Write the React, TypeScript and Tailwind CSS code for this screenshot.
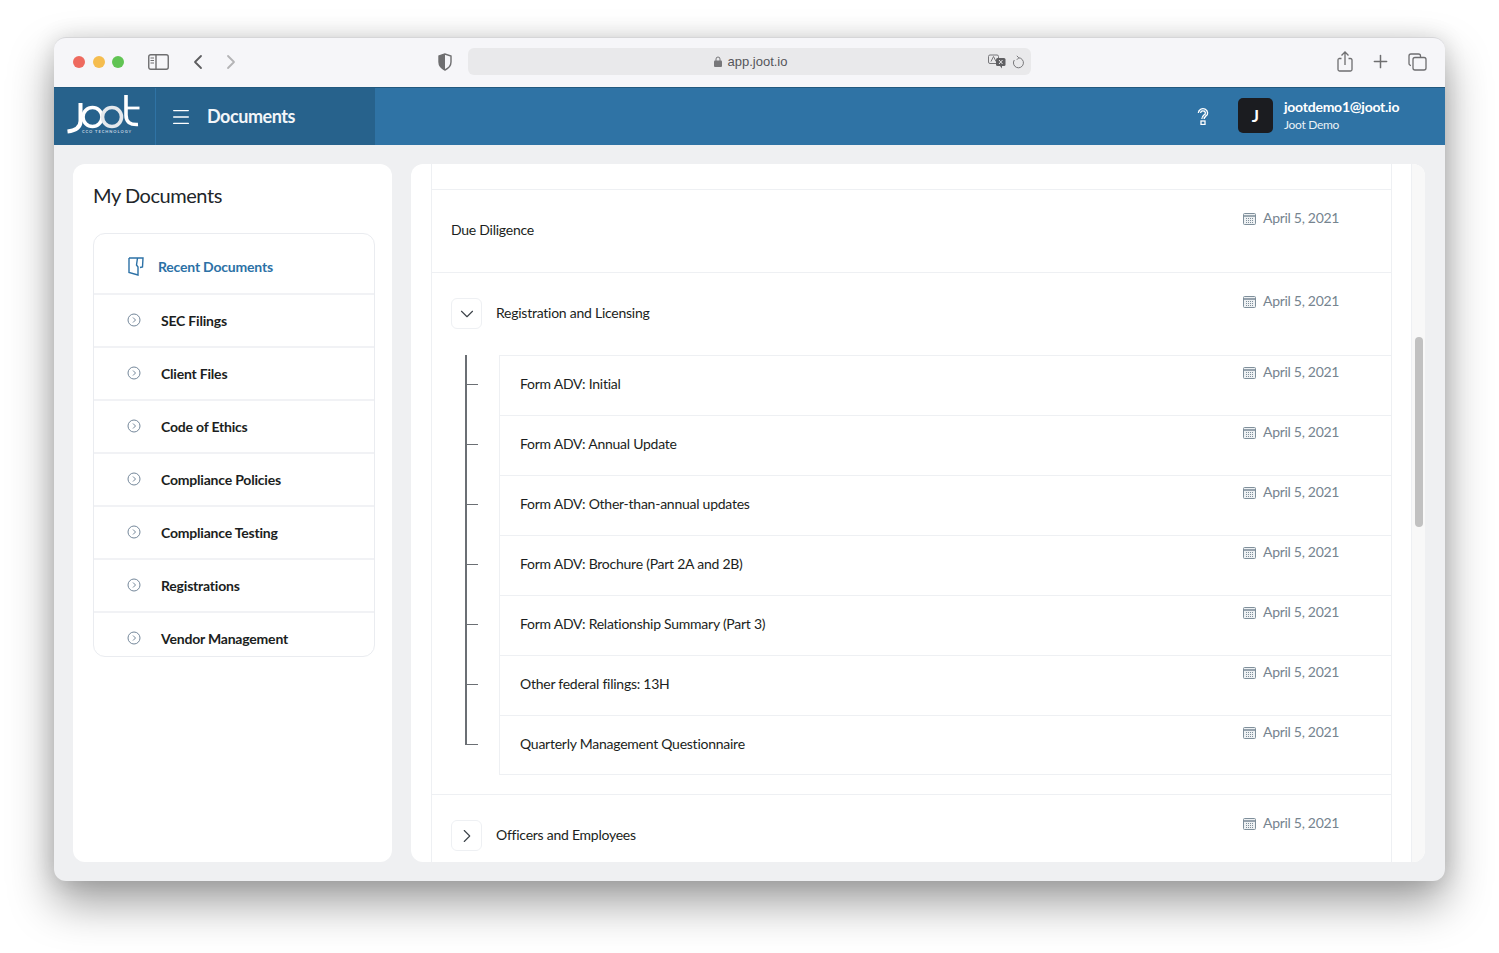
import { ChevronDown, ChevronLeft, ChevronRight, Menu, Plus } from "lucide-react";

const sideItems = [
  "SEC Filings",
  "Client Files",
  "Code of Ethics",
  "Compliance Policies",
  "Compliance Testing",
  "Registrations",
  "Vendor Management",
];

const formRows = [
  "Form ADV: Initial",
  "Form ADV: Annual Update",
  "Form ADV: Other-than-annual updates",
  "Form ADV: Brochure (Part 2A and 2B)",
  "Form ADV: Relationship Summary (Part 3)",
  "Other federal filings: 13H",
  "Quarterly Management Questionnaire",
];

function JootLogo() {
  return (
    <svg width="76" height="40" viewBox="0 0 76 40" fill="none" stroke="white" strokeWidth="3.600">
      <path d="M14.500 9v18c0 6-4 9.500-13 10.500" strokeWidth="4" />
      <circle cx="26.500" cy="23" r="9.500" />
      <circle cx="46" cy="23" r="9.500" stroke="#e4e8ec" />
      <path d="M60 1v20c0 7 4 10 12 9.500" />
      <path d="M60 14h13.500" strokeWidth="2.800" />
    </svg>
  );
}

function HelpIcon() {
  const curve = "M2.500 6a3.500 3.200 0 1 1 5.500 2.600C6.800 9.500 6 10 6 12";
  return (
    <svg width="12" height="18" viewBox="0 0 12 18" fill="none" className="ml-[822px]">
      <path d={curve} stroke="white" strokeWidth="3.600" />
      <path d={curve} stroke="#2f73a5" strokeWidth="1" />
      <rect x="4" y="14" width="4" height="3.500" fill="#2f73a5" stroke="white" strokeWidth="1.300" />
    </svg>
  );
}

function CalendarIcon() {
  return (
    <svg width="13" height="13" viewBox="0 0 13 13" fill="none" className="shrink-0">
      <rect x="0.5" y="1.500" width="12" height="11" rx="1" fill="#eef1f3" stroke="#7f8f9b" />
      <path d="M0.500 4h12" stroke="#7f8f9b" strokeWidth="1.600" />
      <path d="M3 6.500h7M3 8.500h7M3 10.500h7" stroke="#7f8f9b" strokeDasharray="1 1" />
    </svg>
  );
}

function DateLabel() {
  return (
    <div className="flex w-[96px] items-center gap-[7px] text-[14px] leading-[20px] tracking-[-0.3px] text-[#76848f]">
      <CalendarIcon />
      <span className="whitespace-nowrap">April 5, 2021</span>
    </div>
  );
}

function CircleArrow() {
  return (
    <svg width="14" height="14" viewBox="0 0 14 14" fill="none" className="mt-[1px] shrink-0">
      <circle cx="7" cy="7" r="6" stroke="#74879a" />
      <path d="M6 4.500 8.500 7 6 9.500" stroke="#74879a" />
    </svg>
  );
}

function BrowserBar() {
  return (
    <div className="flex h-[50px] items-center rounded-t-[12px] border-t border-[#d6d6d8] bg-[#f6f6f9] pb-[2px] pl-[19px]">
      <div className="flex gap-[7.5px]">
        <span className="size-[12px] rounded-full bg-[#ee6a5f]" />
        <span className="size-[12px] rounded-full bg-[#f5bd4f]" />
        <span className="size-[12px] rounded-full bg-[#61c454]" />
      </div>
      <svg width="21" height="16" viewBox="0 0 21 16" fill="none" className="ml-[24px]">
        <rect x="0.750" y="0.750" width="19.500" height="14.500" rx="2" stroke="#6e6e70" strokeWidth="1.400" />
        <path d="M8 1v14" stroke="#6e6e70" strokeWidth="1.400" />
        <path d="M2.500 4h3.500M2.500 6.500h3.500M2.500 9h3.500" stroke="#6e6e70" />
      </svg>
      <ChevronLeft size={24} strokeWidth={1.8} className="ml-[17px] text-[#5d5d60]" />
      <ChevronRight size={24} strokeWidth={1.8} className="ml-[9px] text-[#b4b4b6]" />
      <svg width="16" height="18" viewBox="0 0 16 18" fill="none" className="ml-[194px]">
        <path d="M8 1 2 3v6c0 4 3 6.500 6 8 3-1.500 6-4 6-8V3L8 1Z" stroke="#6e6e70" strokeWidth="1.400" />
        <path d="M8 1 2 3v6c0 4 3 6.500 6 8V1Z" fill="#6e6e70" />
      </svg>
      <div className="ml-[15px] flex h-[27px] w-[563px] items-center rounded-[6px] bg-[#e9e9eb] pr-[6px]">
        <div className="flex flex-1 items-center justify-center gap-[6px] pl-[45px] font-['Liberation_Sans',sans-serif] text-[13px] text-[#55555a]">
          <svg width="8" height="11" viewBox="0 0 8 11" fill="none">
            <path d="M2 5V3a2 2 0 0 1 4 0v2" stroke="#77777a" />
            <rect y="4.500" width="8" height="6.500" rx="1" fill="#77777a" />
          </svg>
          <span>app.joot.io</span>
        </div>
        <svg width="18" height="15" viewBox="0 0 18 15" fill="none">
          <rect x="0.500" y="1" width="10" height="8.500" rx="1.500" stroke="#77777a" />
          <path d="m3 7.500 2.500-5 2.500 5" stroke="#77777a" />
          <rect x="8" y="4" width="9.500" height="8" rx="1.500" fill="#5f5f62" />
          <path d="m11 6 3.500 4M14.500 6 11 10" stroke="#e9e9eb" />
          <path d="m12 12 2 2.500V12" fill="#5f5f62" />
        </svg>
        <svg width="13" height="14" viewBox="0 0 13 14" fill="none" stroke="#77777a" className="ml-[6px]">
          <path d="M6.500 2.800A5 5 0 1 1 2.300 5" />
          <path d="M4.800 0.800 6.800 2.800 4.800 4.800" />
        </svg>
      </div>
      <div className="ml-[306px] flex items-center">
        <svg width="16" height="21" viewBox="0 0 16 21" fill="none" stroke="#6e6e70" strokeWidth="1.300">
          <path d="M4.500 7.500H2a1.500 1.500 0 0 0-1 1.500v9.500A1.500 1.500 0 0 0 2.500 20h11a1.500 1.500 0 0 0 1.500-1.500V9a1.500 1.500 0 0 0-1.500-1.500H11.500" />
          <path d="M8 14V1M4.500 4.500 8 1l3.500 3.500" />
        </svg>
        <Plus size={21} strokeWidth={1.7} className="ml-[17px] text-[#6e6e70]" />
        <svg width="19" height="18" viewBox="0 0 19 18" fill="none" stroke="#6e6e70" strokeWidth="1.300" className="ml-[17px]">
          <path d="M3 12.500A2 2 0 0 1 1 10.500V3a2 2 0 0 1 2-2h7.500a2 2 0 0 1 2 2v1" />
          <rect x="5" y="4.500" width="13" height="12.500" rx="2" />
        </svg>
      </div>
    </div>
  );
}

function AppHeader() {
  return (
    <div className="flex h-[58px] items-stretch border-t border-[#22597f] bg-[#2f73a5] text-white">
      <div className="flex w-[321px] items-stretch bg-[#27628c]">
        <div className="flex w-[102px] flex-col items-start border-r border-[#2f73a5] pl-[12px] pt-[6px]">
          <JootLogo />
          <span className="-mt-[4px] ml-[16px] whitespace-nowrap text-[4px] leading-[4px] font-bold tracking-[0.24em] text-[#c6d6e2]">
            CCO TECHNOLOGY
          </span>
        </div>
        <div className="flex items-center">
          <Menu size={22} strokeWidth={1.4} className="ml-[14px]" />
          <span className="ml-[15px] text-[18px] font-bold tracking-[-0.45px] text-[#f2f6f9]">Documents</span>
        </div>
      </div>
      <div className="flex flex-1 items-center pb-[2px]">
        <HelpIcon />
        <div className="ml-[29px] flex size-[35px] items-center justify-center rounded-[5px] bg-[#1b1c20] text-[17px] font-bold">J</div>
        <div className="ml-[11px]">
          <p className="text-[14px] leading-[18px] font-bold tracking-[-0.25px]">jootdemo1@joot.io</p>
          <p className="text-[12px] leading-[18px] tracking-[-0.3px] text-[#eaf1f6]">Joot Demo</p>
        </div>
      </div>
    </div>
  );
}

function Sidebar() {
  return (
    <aside className="w-[319px] rounded-[12px] bg-white pl-[20px]">
      <h2 className="pt-[17px] text-[20px] leading-[28px] tracking-[-0.45px] text-[#212529]">My Documents</h2>
      <div className="mt-[24px] w-[282px] rounded-[12px] border border-[#eaecf0] text-[14px] font-bold tracking-[-0.2px]">
        <div className="flex h-[61px] items-center border-b-2 border-[#f1f2f5] pl-[34px] pt-[5px]">
          <svg width="16" height="19" viewBox="0 0 16 19" fill="none" stroke="#2c71a6" strokeWidth="1.400">
            <path d="M1 1h14l-.5 9-2.500.5" />
            <path d="M1 1v14.500l9 2.500v-8L8.500 8l1-7" />
          </svg>
          <span className="ml-[14px] text-[#2c71a6]">Recent Documents</span>
        </div>
        {sideItems.map((item, i) => (
          <div
            key={item}
            className={
              i === sideItems.length - 1
                ? "flex h-[43px] items-start pl-[33px] pt-[17px]"
                : "flex h-[53px] items-start border-b-2 border-[#f1f2f5] pl-[33px] pt-[17px]"
            }
          >
            <CircleArrow />
            <span className="ml-[20px] leading-[18px] text-[#1b1e21]">{item}</span>
          </div>
        ))}
      </div>
    </aside>
  );
}

function ExpandButton({ open }: { open: boolean }) {
  return (
    <div className="flex size-[31px] shrink-0 items-center justify-center rounded-[6px] border border-[#eef0f3] text-[#3c4248]">
      {open ? <ChevronDown size={22} strokeWidth={1.2} /> : <ChevronRight size={22} strokeWidth={1.2} />}
    </div>
  );
}

function DocumentsPanel() {
  return (
    <section className="flex h-[698px] w-[1014px] overflow-hidden rounded-[12px] bg-white pl-[20px]">
      <div className="w-[961px] border-x border-[#eef0f3] text-[14px] leading-[20px] tracking-[-0.25px] text-[#1b1e21]">
        <div className="h-[26px] border-b border-[#eef0f3]" />

        <div className="flex h-[83px] justify-between border-b border-[#eef0f3] pl-[19px] pr-[52px]">
          <span className="pt-[30px]">Due Diligence</span>
          <div className="pt-[18px]">
            <DateLabel />
          </div>
        </div>

        <div className="flex h-[82px] justify-between pl-[19px] pr-[52px]">
          <div className="flex items-start pt-[25px]">
            <ExpandButton open />
            <span className="ml-[14px] pt-[5px]">Registration and Licensing</span>
          </div>
          <div className="pt-[18px]">
            <DateLabel />
          </div>
        </div>

        <div className="border-b border-[#eef0f3] pb-[19px]">
          {formRows.map((row, i) => (
            <div key={row} className="flex h-[60px]">
              <div className="ml-[33px] w-[34px] shrink-0">
                <div className="h-[30px] w-[13px] border-b border-l-2 border-[#6b6f74]" />
                {i < formRows.length - 1 ? <div className="h-[30px] border-l-2 border-[#6b6f74]" /> : null}
              </div>
              <div
                className={
                  i === formRows.length - 1
                    ? "flex flex-1 justify-between border-y border-l border-[#eef0f3] pl-[20px] pr-[52px]"
                    : "flex flex-1 justify-between border-t border-l border-[#eef0f3] pl-[20px] pr-[52px]"
                }
              >
                <span className="pt-[18px]">{row}</span>
                <div className="pt-[6px]">
                  <DateLabel />
                </div>
              </div>
            </div>
          ))}
        </div>

        <div className="flex justify-between pl-[19px] pr-[52px]">
          <div className="flex items-start pt-[25px]">
            <ExpandButton open={false} />
            <span className="ml-[14px] pt-[5px]">Officers and Employees</span>
          </div>
          <div className="pt-[18px]">
            <DateLabel />
          </div>
        </div>
      </div>
      <div className="ml-[19px] w-[14px] border-l border-[#eef0f3] bg-[#f8f8f8] pl-[3px] pt-[173px]">
        <div className="h-[190px] w-[8px] rounded-full bg-[#c1c1c1]" />
      </div>
    </section>
  );
}

export default function App() {
  return (
    <div className="h-[953px] overflow-hidden bg-white pl-[54px] pt-[37px] font-['Lato',sans-serif]">
      <div className="h-[844px] w-[1391px] rounded-[12px] bg-[#eff0f2] shadow-[0_22px_45px_rgba(0,0,0,0.38),0_0_22px_rgba(0,0,0,0.12)]">
        <BrowserBar />
        <AppHeader />
        <div className="flex gap-[19px] px-[19px] pt-[19px]">
          <Sidebar />
          <DocumentsPanel />
        </div>
      </div>
    </div>
  );
}
